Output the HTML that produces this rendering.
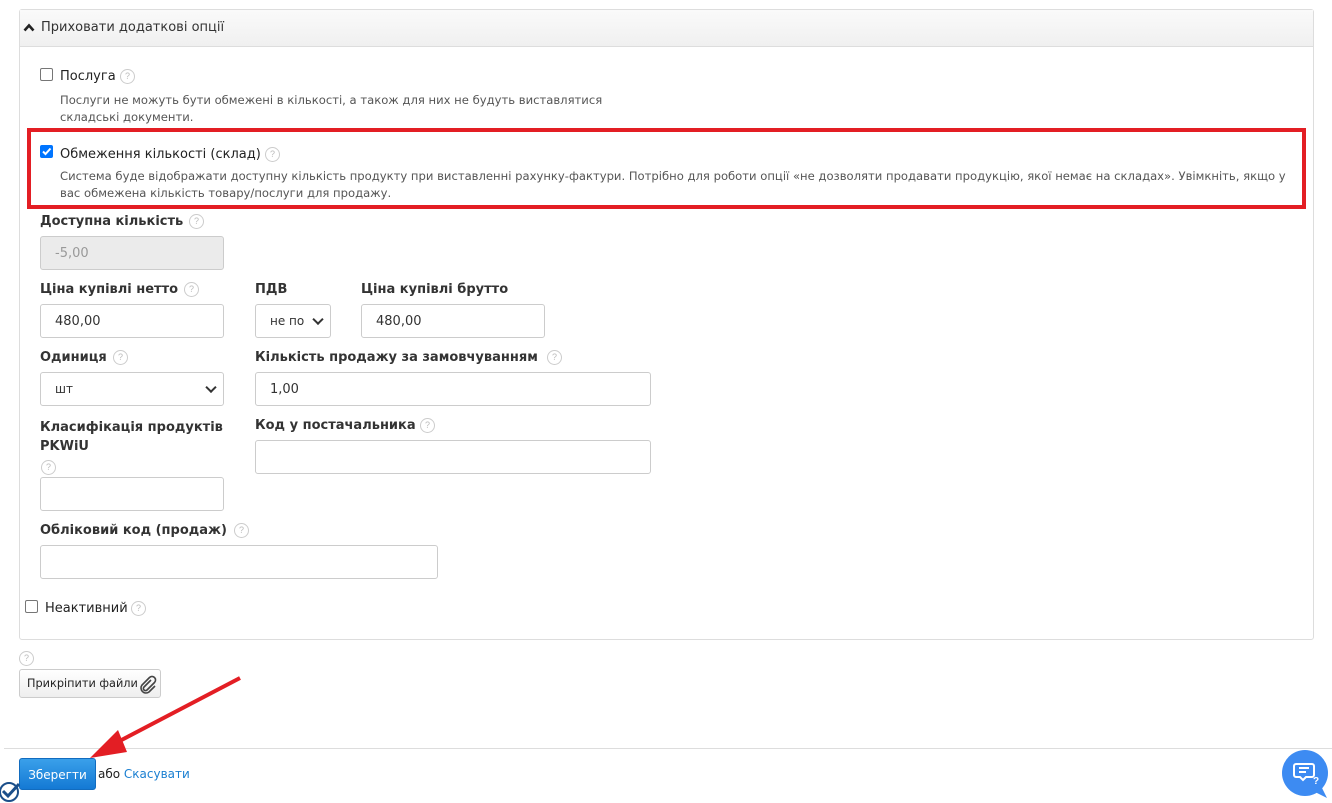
<!DOCTYPE html>
<html><head><meta charset="utf-8"><style>
*{box-sizing:border-box;margin:0;padding:0}
body{width:1332px;height:803px;background:#fff;font-family:"DejaVu Sans","Liberation Sans",sans-serif;font-size:13px;color:#222;position:relative;overflow:hidden}
.a{position:absolute;white-space:nowrap}
.panel{position:absolute;left:19px;top:9px;width:1295px;height:631px;border:1px solid #ddd;border-radius:3px}
.hdr{position:absolute;left:0;top:0;right:0;height:37px;background:linear-gradient(#fafafa,#f0f0f0);border-bottom:1px solid #ddd}
.q{position:absolute;width:15px;height:15px;border:1px solid #ccc;border-radius:50%;color:#bbb;font-size:9px;line-height:13px;text-align:center;font-family:"Liberation Sans",sans-serif}
.cb{position:absolute;width:13px;height:13px;border:1px solid #767676;border-radius:2px;background:#fff}
.cb.on{background:#0075ff;border-color:#0075ff}
.desc{font-size:11.6px;color:#555;line-height:17px}
.lb{font-weight:bold;color:#333}
.in{position:absolute;border:1px solid #ccc;border-radius:3px;background:#fff;padding-left:14px;font-size:13px;display:flex;align-items:center;color:#333}
.sel:after{content:"";position:absolute;right:8px;top:50%;width:6px;height:6px;border-right:2px solid #333;border-bottom:2px solid #333;transform:translateY(-70%) rotate(45deg)}
</style></head><body>
<div class="panel"><div class="hdr"></div></div>
<svg class="a" style="left:23px;top:23px" width="12" height="9" viewBox="0 0 12 9"><path d="M1.5 7.5L6 2.5l4.5 5" fill="none" stroke="#222" stroke-width="2.6"/></svg>
<div class="a" style="left:41px;top:20px;color:#333">Приховати додаткові опції</div>

<div class="cb" style="left:40px;top:68px"></div>
<div class="a" style="left:60px;top:69px">Послуга</div>
<div class="q" style="left:120px;top:69px">?</div>
<div class="a desc" style="left:60px;top:92px">Послуги не можуть бути обмежені в кількості, а також для них не будуть виставлятися<br>складські документи.</div>

<div class="a" style="left:27px;top:128px;width:1279px;height:81px;border:4px solid #e31e24"></div>
<div class="cb on" style="left:40px;top:145px"><svg width="11" height="11" viewBox="0 0 11 11" style="position:absolute;left:0;top:0"><path d="M2 5.5l2.5 2.5L9.5 2.5" fill="none" stroke="#fff" stroke-width="2"/></svg></div>
<div class="a" style="left:60px;top:147px">Обмеження кількості (склад)</div>
<div class="q" style="left:265px;top:147px">?</div>
<div class="a desc" style="left:60px;top:168px">Система буде відображати доступну кількість продукту при виставленні рахунку-фактури. Потрібно для роботи опції «не дозволяти продавати продукцію, якої немає на складах». Увімкніть, якщо у<br>вас обмежена кількість товару/послуги для продажу.</div>

<div class="a lb" style="left:40px;top:214px">Доступна кількість</div>
<div class="q" style="left:189px;top:214px">?</div>
<div class="in" style="left:40px;top:236px;width:184px;height:34px;background:#ebebeb;color:#999">-5,00</div>

<div class="a lb" style="left:40px;top:282px">Ціна купівлі нетто</div>
<div class="q" style="left:184px;top:282px">?</div>
<div class="a lb" style="left:255px;top:282px">ПДВ</div>
<div class="a lb" style="left:361px;top:282px">Ціна купівлі брутто</div>
<div class="in" style="left:40px;top:304px;width:184px;height:34px">480,00</div>
<div class="in sel" style="left:255px;top:304px;width:76px;height:34px;font-size:12px;overflow:hidden">не по</div>
<div class="in" style="left:361px;top:304px;width:184px;height:34px">480,00</div>

<div class="a lb" style="left:40px;top:350px">Одиниця</div>
<div class="q" style="left:113px;top:350px">?</div>
<div class="a lb" style="left:255px;top:350px">Кількість продажу за замовчуванням</div>
<div class="q" style="left:547px;top:350px">?</div>
<div class="in sel" style="left:40px;top:372px;width:184px;height:34px;font-size:12px">шт</div>
<div class="in" style="left:255px;top:372px;width:396px;height:34px">1,00</div>

<div class="a lb" style="left:40px;top:418px;line-height:19px">Класифікація продуктів<br>PKWiU</div>
<div class="q" style="left:41px;top:460px">?</div>
<div class="in" style="left:40px;top:477px;width:184px;height:34px"></div>
<div class="a lb" style="left:255px;top:418px">Код у постачальника</div>
<div class="q" style="left:420px;top:418px">?</div>
<div class="in" style="left:255px;top:440px;width:396px;height:34px"></div>

<div class="a lb" style="left:40px;top:523px">Обліковий код (продаж)</div>
<div class="q" style="left:234px;top:523px">?</div>
<div class="in" style="left:40px;top:545px;width:398px;height:34px"></div>

<div class="cb" style="left:25px;top:600px"></div>
<div class="a" style="left:45px;top:601px">Неактивний</div>
<div class="q" style="left:131px;top:601px">?</div>

<div class="q" style="left:19px;top:651px">?</div>
<div class="a" style="left:19px;top:669px;width:142px;height:29px;border:1px solid #ccc;border-radius:3px;background:linear-gradient(#fff,#eee);font-size:11.3px;padding:7px 0 0 7px">Прикріпити файли</div>
<svg class="a" style="left:137px;top:674px" width="20" height="20" viewBox="0 0 20 20"><path d="M14 6l-7 7a2 2 0 0 0 3 3l7.5-7.5a3.5 3.5 0 0 0-5-5L5 11a5 5 0 0 0 7 7l6-6" fill="none" stroke="#444" stroke-width="1.6"/></svg>

<div class="a" style="left:4px;top:748px;width:1328px;height:1px;background:#ddd"></div>
<div class="a" style="left:19px;top:758px;width:77px;height:32px;border-radius:3px;background:linear-gradient(#3aa0ea,#1479d4);border:1px solid #126cbf;color:#fff;font-size:12px;padding-top:9px;text-align:center">Зберегти</div>
<div class="a" style="left:98px;top:767px;font-size:12px">або <span style="color:#1a7fd1">Скасувати</span></div>
<svg class="a" style="left:0;top:780px" width="22" height="23" viewBox="0 0 22 23"><circle cx="9" cy="12" r="9" fill="#fff" stroke="#1b4f8a" stroke-width="2"/><path d="M3 11l5 5 11-12" fill="none" stroke="#1b4f8a" stroke-width="3"/></svg>

<svg class="a" style="left:0;top:0" width="1332" height="803"><line x1="240" y1="678" x2="110" y2="746" stroke="#e31e24" stroke-width="4"/><polygon points="90,758 118,730 127,752" fill="#e31e24"/></svg>

<svg class="a" style="left:1278px;top:746px" width="54" height="57" viewBox="0 0 54 57"><circle cx="27" cy="27" r="23" fill="#3d8bf2"/><path d="M43 40l6 12-12-6z" fill="#3d8bf2"/><path d="M18 18h16a2 2 0 0 1 2 2v9a2 2 0 0 1-2 2h-6l-3 3-3-3h-4a2 2 0 0 1-2-2v-9a2 2 0 0 1 2-2z" fill="none" stroke="#fff" stroke-width="2"/><path d="M21 22h10M21 26h7" stroke="#fff" stroke-width="2"/><text x="35" y="38" fill="#fff" font-size="10" font-weight="bold" font-family="Liberation Sans">?</text></svg>
</body></html>
